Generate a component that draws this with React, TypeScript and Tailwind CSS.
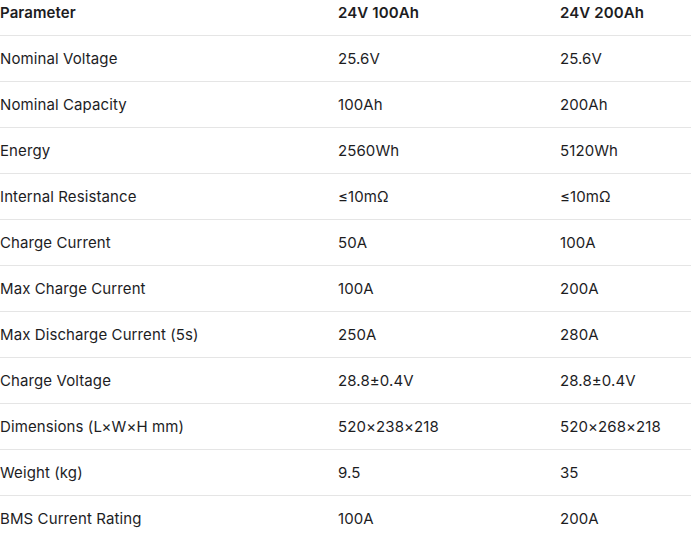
const rows: [string, string, string][] = [
  ["Nominal Voltage", "25.6V", "25.6V"],
  ["Nominal Capacity", "100Ah", "200Ah"],
  ["Energy", "2560Wh", "5120Wh"],
  ["Internal Resistance", "≤10mΩ", "≤10mΩ"],
  ["Charge Current", "50A", "100A"],
  ["Max Charge Current", "100A", "200A"],
  ["Max Discharge Current (5s)", "250A", "280A"],
  ["Charge Voltage", "28.8±0.4V", "28.8±0.4V"],
  ["Dimensions (L×W×H mm)", "520×238×218", "520×268×218"],
  ["Weight (kg)", "9.5", "35"],
  ["BMS Current Rating", "100A", "200A"],
];

export default function App() {
  return (
    <div className="w-[691px] h-[541px] overflow-hidden bg-white text-[#1d1d1f] font-['Inter','Noto_Sans',sans-serif] text-[15px] tracking-[0.1px]">
      <table className="-mt-[11px] w-full border-collapse text-left">
        <thead>
          <tr className="h-[46px] border-b border-[#e5e5e5]">
            <th className="w-[338px] p-0 pt-[2px] font-semibold">Parameter</th>
            <th className="w-[222px] p-0 pt-[2px] font-semibold">24V 100Ah</th>
            <th className="p-0 pt-[2px] font-semibold">24V 200Ah</th>
          </tr>
        </thead>
        <tbody>
          {rows.map(([name, a, b]) => (
            <tr key={name} className="h-[46px] border-b border-[#e5e5e5]">
              <td className="p-0 pt-[2px]">{name}</td>
              <td className="p-0 pt-[2px]">{a}</td>
              <td className="p-0 pt-[2px]">{b}</td>
            </tr>
          ))}
        </tbody>
      </table>
    </div>
  );
}
